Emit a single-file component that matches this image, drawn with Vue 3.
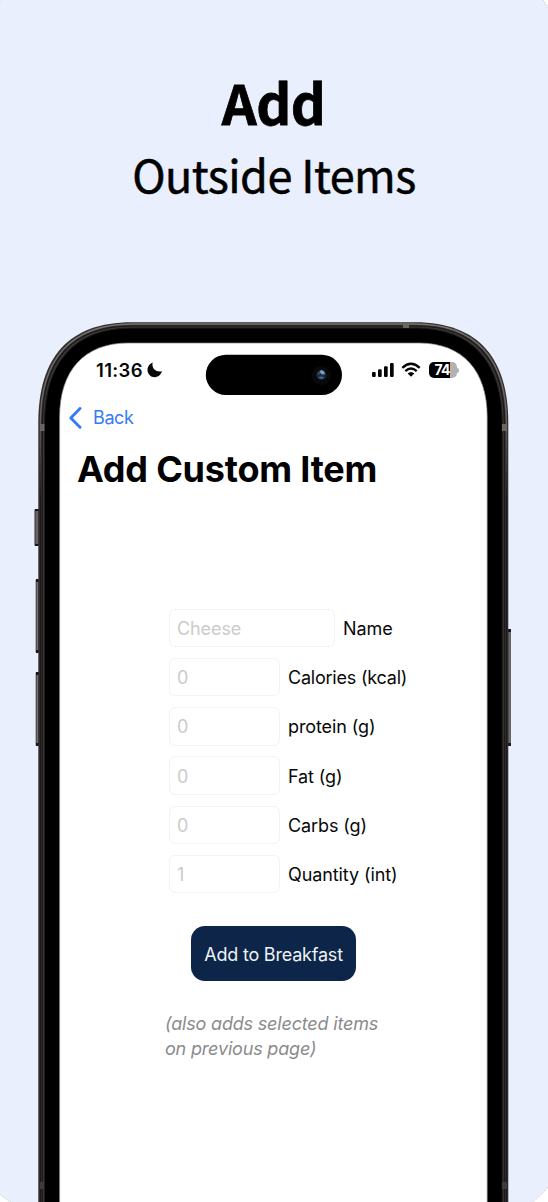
<script setup>
const fields = [
  { label: 'Name', hint: 'Cheese', wide: true, cls: 'name' },
  { label: 'Calories (kcal)', hint: '0', cls: 'cal' },
  { label: 'protein (g)', hint: '0', cls: 'pro' },
  { label: 'Fat (g)', hint: '0', cls: 'fat' },
  { label: 'Carbs (g)', hint: '0', cls: 'carb' },
  { label: 'Quantity (int)', hint: '1', cls: 'qty' },
]
</script>

<template>
  <main class="page">
    <svg class="art" width="548" height="1202" viewBox="0 0 548 1202" aria-hidden="true">
      <defs>
        <linearGradient id="key" x1="0" x2="1" y1="0" y2="0">
          <stop offset="0" stop-color="#33302f" />
          <stop offset=".55" stop-color="#77716f" />
          <stop offset="1" stop-color="#383533" />
        </linearGradient>
        <linearGradient id="rim" gradientUnits="userSpaceOnUse" x1="0" x2="0" y1="322" y2="500">
          <stop offset="0" stop-color="#767270" />
          <stop offset=".5" stop-color="#6a6664" />
          <stop offset="1" stop-color="#1b1a1a" />
        </linearGradient>
      </defs>
      <rect width="548" height="1202" fill="#fff" />
      <path d="M2 0H543Q546 4 548 8V1187Q541 1196 532 1202H11Q5 1199 0 1194V2Z" fill="#e9effc" />
      <path d="M543 0Q546 4 548 8M548 1187Q541 1196 532 1202M11 1202Q5 1199 0 1194M0 2L2 0" fill="none" stroke="#b9bbc0" stroke-width=".8" stroke-dasharray="1 1" />

      <g fill="url(#key)">
        <rect x="34.5" y="509" width="4.5" height="37" rx="1" />
        <rect x="35.7" y="579" width="3.3" height="74" rx="1" />
        <rect x="35.7" y="672" width="3.3" height="74" rx="1" />
        <rect x="507.5" y="629" width="3.3" height="117" rx="1" />
      </g>
      <g fill="#171616">
        <rect x="35" y="509" width="4" height="2" /><rect x="35" y="544" width="4" height="2" />
        <rect x="36" y="579" width="3" height="3" /><rect x="36" y="650" width="3" height="3" />
        <rect x="36" y="672" width="3" height="3" /><rect x="36" y="743" width="3" height="3" />
        <rect x="508" y="629" width="3" height="3" /><rect x="508" y="743" width="3" height="3" />
      </g>

      <path d="M38.3 1210V423C38.3 358 68 322.3 132 322.3H415C480 322.3 508.3 360 508.3 423V1210Z" fill="#32302f" />
      <path d="M40.4 1210V423C40.4 360 70 324 132 324H415C477 324 506.5 360 506.5 423V1210" fill="none" stroke="url(#rim)" stroke-width="1.4" />
      <path d="M42.4 1210V423C42.4 361 71 326 132 326H415C476 326 504.4 361 504.4 423V1210" fill="#393635" stroke="#1b1919" stroke-width="1.2" />
      <path d="M44.5 1210V423C44.5 364 73 328 132 328H415C474 328 502.2 364 502.2 423V1210Z" fill="#000" stroke="#1d1c1b" stroke-width="1" />
      <g fill="#696563">
        <rect x="403" y="323" width="6" height="5" /><rect x="40" y="424" width="4.5" height="7" /><rect x="502" y="424" width="5" height="7" />
      </g>
      <g fill="#3d3b3a">
        <rect x="40" y="1182" width="4" height="7" /><rect x="502" y="1182" width="5" height="7" />
      </g>
      <path d="M59.6 1210V417C59.6 371 84 343 128 343H419C463 343 487.2 371 487.2 417V1210Z" fill="#fff" stroke="#888" stroke-width=".7" />

      <rect x="205.8" y="354.8" width="136.2" height="40.2" rx="20.1" fill="#000" />
      <circle cx="321.3" cy="375.5" r="9.5" fill="#090909" />
      <circle cx="321.3" cy="375" r="5" fill="#182838" />
      <path d="M321 370a4 4 0 0 1 3.8 4.3l-3 .3-2.4-2.8Z" fill="#6fa0ca" />
      <path d="M318.2 377.3q3.4-1.6 6 .2a4 4 0 0 1-6-.2Z" fill="#40698d" />
      <path d="M317.2 373.5l2-2 .8 2.5-1.5 1Z" fill="#36536c" />
    </svg>

    <header class="hero">
      <h1>Add</h1>
      <p>Outside Items</p>
    </header>

    <section class="screen">
      <div class="status">
        <div class="clock">
          <span>11:36</span>
          <svg width="16" height="16" viewBox="0 0 16 16"><path d="M5.7.5C4.4 5.5 7.9 10.6 15.2 9.3C13.6 13.2 10.9 15.2 7.7 15.2C3.6 15.2.5 12 .5 8C.5 4.6 2.6 1.6 5.7.5Z" fill="#080808" /></svg>
        </div>
        <div class="signals">
          <svg width="22" height="16" viewBox="0 0 22 16" fill="#050505">
            <rect x="0" y="10" width="3.7" height="5" rx="1.1" /><rect x="6" y="7.3" width="3.7" height="7.7" rx="1.1" /><rect x="12" y="4.2" width="3.7" height="10.8" rx="1.1" /><rect x="18" y="1" width="3.7" height="14" rx="1.1" />
          </svg>
          <svg class="wifi" width="20" height="16" viewBox="0 0 20 16" fill="none" stroke="#080808" stroke-width="2.3">
            <path d="M1.3 5.8Q10-2.3 18.7 5.8M4.3 9.1Q10 3.8 15.7 9.1" /><path d="M6.6 11.5Q10 8.4 13.4 11.5L10 14.8Z" fill="#080808" stroke="none" />
          </svg>
          <div class="battery"><b>74</b></div>
          <i class="nub"></i>
        </div>
      </div>

      <nav class="back">
        <svg width="13" height="22" viewBox="0 0 13 22"><path d="M11 1.5L1.8 11L11 20.2" fill="none" stroke="#347bf6" stroke-width="2.9" stroke-linecap="round" stroke-linejoin="round" /></svg>
        <span>Back</span>
      </nav>
      <h2><span>Add Custom Item</span></h2>

      <div class="form">
        <div v-for="f in fields" :key="f.label" class="row">
          <div class="field" :class="{ wide: f.wide }"><span>{{ f.hint }}</span></div>
          <label :class="f.cls">{{ f.label }}</label>
        </div>
      </div>
      <div class="submit"><span>Add to Breakfast</span></div>
      <p class="note"><span>(also adds selected items</span><br /><span>on previous page)</span></p>
    </section>
  </main>
</template>

<style>
body { margin: 0; background: #fff; }
</style>

<style scoped>
.page { position: relative; width: 548px; height: 1202px; overflow: hidden; font-family: Inter, sans-serif; color: #080808; }
.art { position: absolute; inset: 0; display: block; }
.hero { position: relative; height: 343px; box-sizing: border-box; padding-top: 66px; text-align: center; font-family: "Noto Sans CJK SC", sans-serif; color: #000; }
.hero h1 { margin: 0; font-size: 54.5px; line-height: 72px; font-weight: 700; letter-spacing: -.6px; padding-right: 1px; -webkit-text-stroke: .8px #000; }
.hero p { margin: 0; font-size: 45px; line-height: 72px; font-weight: 400; letter-spacing: -.55px; -webkit-text-stroke: .5px #000; }
.screen { position: relative; margin-left: 60px; width: 427px; height: 859px; }
.status { height: 54px; display: flex; justify-content: space-between; align-items: center; padding: 0 28px 0 36px; box-sizing: border-box; }
.clock { display: flex; align-items: center; gap: 4px; font-size: 18.5px; font-weight: 600; line-height: 22px; letter-spacing: .35px; }
.signals { display: flex; align-items: center; }
.wifi { margin-left: 7px; }
.battery { margin-left: 8px; width: 28px; height: 16px; border-radius: 5px; background: linear-gradient(90deg, #000 75%, #b2b2b2 75%); color: #fff; text-align: center; line-height: 16px; font-size: 14px; }
.battery b { font-weight: 700; letter-spacing: -.8px; margin-right: 2px; }
.nub { width: 2px; height: 5px; margin-left: 0; border-radius: 0 2px 2px 0; background: #b2b2b2; }
.back { height: 42px; display: flex; align-items: center; gap: 11px; padding-left: 9px; color: #347bf6; font-size: 18px; line-height: 22px; letter-spacing: -.4px; }
.screen h2 { margin: 7px 0 0 17px; font-size: 36px; line-height: 46px; font-weight: 700; letter-spacing: -.2px; white-space: nowrap; color: #000; }
.form { margin: 117px 0 0 109px; display: flex; flex-direction: column; gap: 11.2px; }
.row { display: flex; align-items: center; gap: 8px; height: 38px; font-size: 18px; white-space: nowrap; letter-spacing: -.1px; }
.row label { padding-top: 1px; }
.cal { letter-spacing: -.22px; }
.field { box-sizing: border-box; width: 111px; height: 38.5px; border: 1.5px solid #f3f3f3; border-radius: 6px; padding: 1px 0 0 7px; display: flex; align-items: center; color: #cbcbcb; }
.field.wide { width: 166px; }
.submit { margin: 33.3px 0 0 131px; padding-top: 1px; box-sizing: border-box; width: 165px; height: 55px; border-radius: 14px; background: #0c2548; color: #eff2f6; display: flex; align-items: center; justify-content: center; font-size: 18px; letter-spacing: -.2px; white-space: nowrap; }
.note { margin: 31px 0 0 105px; font-size: 18px; line-height: 24.5px; font-style: italic; letter-spacing: -.18px; color: #8b8b8d; white-space: nowrap; }
</style>
